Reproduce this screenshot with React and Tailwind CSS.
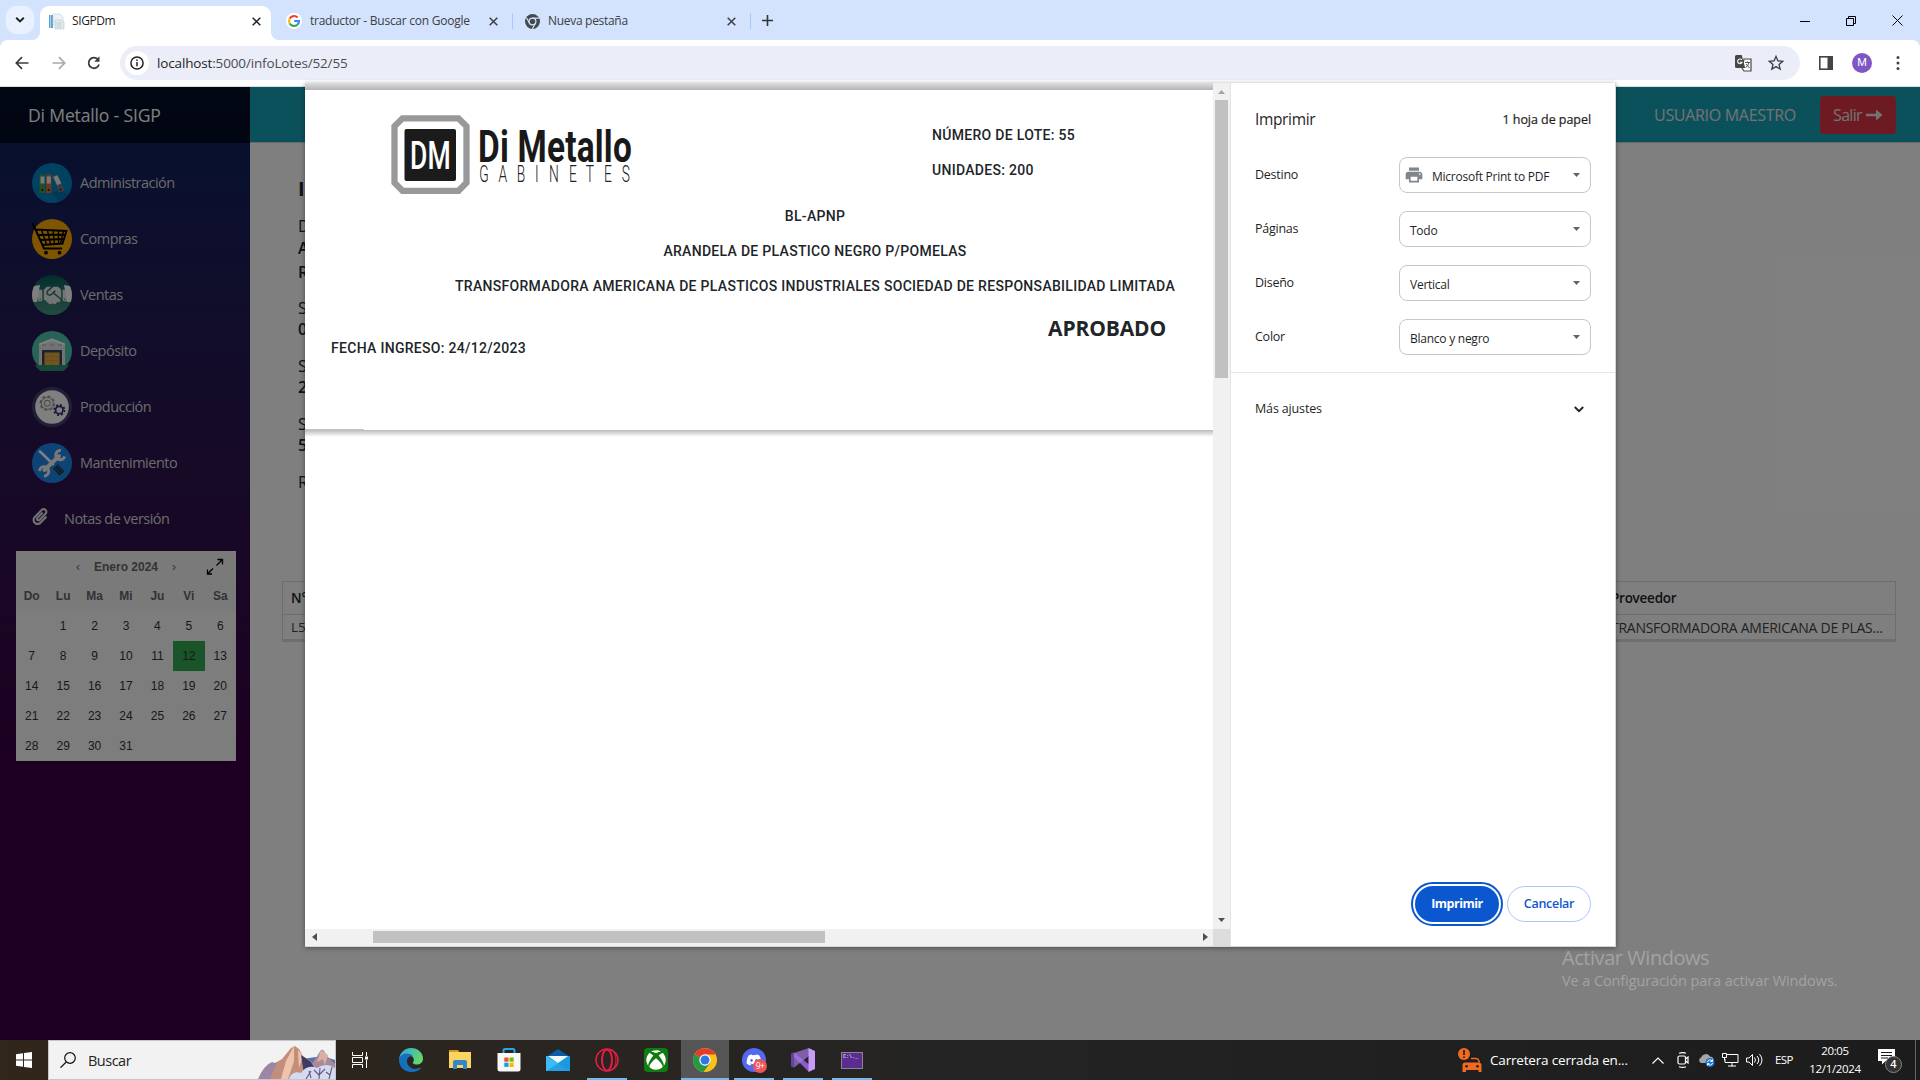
import React from "react";
import { FaHandshake, FaXbox, FaDiscord, FaPaperclip, FaLongArrowAltRight } from "react-icons/fa";
import { MdPrint, MdStarBorder } from "react-icons/md";

const UI = "font-['Open_Sans','Noto_Sans',sans-serif]";

function Close({ className = "" }) {
  return (
    <svg className={className} width="9" height="9" viewBox="0 0 9 9" stroke="currentColor" strokeWidth="1.5">
      <path d="M.7.7l7.6 7.6M8.3.7L.7 8.3" />
    </svg>
  );
}

function GoogleG() {
  return (
    <svg width="16" height="16" viewBox="0 0 16 16">
      <circle cx="8" cy="8" r="8" fill="#fff" />
      <g fill="none" strokeWidth="2.2">
        <path d="M3.7 5.5A5 5 0 0 1 11.6 4.5" stroke="#ea4335" />
        <path d="M3.7 5.5a5 5 0 0 0 0 5" stroke="#fbbc05" />
        <path d="M3.7 10.5a5 5 0 0 0 7.5 1.3" stroke="#34a853" />
        <path d="M8.2 8H13a5 5 0 0 1-1.8 3.8" stroke="#4285f4" />
      </g>
    </svg>
  );
}

function ChromeGray() {
  return (
    <svg width="15" height="15" viewBox="0 0 16 16">
      <circle cx="8" cy="8" r="8" fill="#45494d" />
      <circle cx="8" cy="8" r="3.6" fill="none" stroke="#d3e3fd" strokeWidth="1.3" />
      <path d="M8 4.4h7M4.9 9.8L1.5 4M11.1 9.8L7.8 15.8" stroke="#d3e3fd" strokeWidth="1.2" />
    </svg>
  );
}

function TabStrip() {
  return (
    <div className="flex h-10 shrink-0 items-end bg-[#d3e3fd] text-[12px] tracking-[-0.3px] text-[#3c4043]">
      <div className="ml-1.5 mb-1.5 flex h-7 w-7 items-center justify-center rounded-[10px] bg-[#e9f1fe]">
        <svg width="10" height="6" viewBox="0 0 10 6" fill="none" stroke="#1f1f1f" strokeWidth="1.9"><path d="M1.2 .8L5 4.5 8.800 .8" /></svg>
      </div>
      <div className="relative ml-1.5 flex h-[34px] w-[231px] items-center rounded-t-[9px] bg-white pb-1 text-[#1f1f1f]">
        <svg className="absolute -left-2 bottom-0" width="8" height="8"><path d="M8 0v8H0a8 8 0 0 0 8-8z" fill="#fff" /></svg>
        <svg className="absolute -right-2 bottom-0" width="8" height="8"><path d="M0 0v8h8a8 8 0 0 1-8-8z" fill="#fff" /></svg>
        <svg className="ml-2" width="17" height="17" viewBox="0 0 17 17">
          <path d="M1 2h4v13H1z" fill="#5ba3cf" /><path d="M2 2h1v13H2z" fill="#a7d3ee" />
          <path d="M5 1h7l3 3v8H5z" fill="#eef3f7" stroke="#c3ccd3" strokeWidth=".6" />
          <path d="M7 7h6l3 2v7H7z" fill="#e3eaf0" stroke="#b9c3cc" strokeWidth=".6" />
          <path d="M8.500 10h5M8.500 12h5M8.500 14h5" stroke="#b2bdc8" strokeWidth=".7" />
        </svg>
        <span className="ml-[7px] flex-1 tracking-[-0.4px]">SIGPDm</span>
        <Close className="mr-[10px]" />
      </div>
      <div className="flex h-[34px] w-[242px] items-center pb-1 pl-[15px]">
        <GoogleG />
        <span className="ml-2 flex-1 whitespace-nowrap tracking-[-0.25px]">traductor - Buscar con Google</span>
        <Close className="mr-[14px]" />
        <i className="h-4 w-px bg-[#a8c7fa]" />
      </div>
      <div className="flex h-[34px] w-[238px] items-center pb-1 pl-3">
        <ChromeGray />
        <span className="ml-2 flex-1 tracking-[-0.3px]">Nueva pestaña</span>
        <Close className="mr-[14px]" />
        <i className="h-4 w-px bg-[#a8c7fa]" />
      </div>
      <svg className="mb-[14px] ml-[11px]" width="11" height="11" viewBox="0 0 11 11" stroke="#333" strokeWidth="1.6"><path d="M5.500 0v11M0 5.500h11" /></svg>
      <div className="mb-[14px] ml-auto mr-[17px] flex items-center gap-9">
        <svg width="10" height="10" stroke="#000"><path d="M0 5.500h10" /></svg>
        <svg width="10" height="10" fill="none" stroke="#000"><path d="M.5 2.500h7v7h-7zM2.500 2.500v-2h7v7h-2" /></svg>
        <svg width="11" height="11" stroke="#000"><path d="M.5.5l10 10M10.500.5l-10 10" /></svg>
      </div>
    </div>
  );
}

function Toolbar() {
  return (
    <div className="bg-[#d3e3fd]">
      <div className="flex h-[47px] items-center rounded-t-[8px] border-b border-[#dcdcdc] bg-white">
        <svg className="ml-[15px]" width="14" height="14" viewBox="0 0 14 14" fill="none" stroke="#3c3c3c" strokeWidth="1.700"><path d="M13.500 7H1.500M7 1.200L1.300 7 7 12.800" /></svg>
        <svg className="ml-[23px]" width="14" height="14" viewBox="0 0 14 14" fill="none" stroke="#a9a9a9" strokeWidth="1.700"><path d="M.5 7h12M7 1.200L12.700 7 7 12.800" /></svg>
        <svg className="ml-[21px]" width="14" height="14" viewBox="0 0 14 14" fill="none" stroke="#3c3c3c" strokeWidth="1.800"><path d="M12 8.500A5.300 5.300 0 1 1 11 3.500" /><path d="M12.500 .3v5.400H7.200z" fill="#3c3c3c" stroke="none" /></svg>
        <div className="ml-[19px] flex h-[34px] w-[1680px] items-center rounded-full bg-[#ebeef8]">
          <div className="ml-[5px] flex h-6 w-6 items-center justify-center rounded-full bg-white">
            <svg width="14" height="14" viewBox="0 0 14 14" fill="none" stroke="#222" strokeWidth="1.500"><circle cx="7" cy="7" r="6.100" /><path d="M7 6v4.200M7 3.500v1.500" /></svg>
          </div>
          <span className="ml-2 text-[13.500px] tracking-[-0.15px] text-[#4a4d51]"><span className="text-[#1f1f1f]">localhost</span>:5000/infoLotes/52/55</span>
          <svg className="ml-auto" width="17" height="17" viewBox="0 0 17 17">
            <path d="M9 4h7v12H9L7 13z" fill="#fff" stroke="#474747" strokeWidth="1.200" />
            <path d="M1.500 0h5.200l3.500 13H1.500A1.500 1.500 0 0 1 0 11.500v-10A1.500 1.500 0 0 1 1.500 0z" fill="#474747" />
            <path d="M6.800 5a2.300 2.300 0 1 0 .3 2.200H4.800" fill="none" stroke="#fff" strokeWidth="1.100" />
            <path d="M10 7.500h5M12.500 6.500v1M14 7.500q-1 4-3.500 5M11 9l3.500 4" fill="none" stroke="#474747" strokeWidth=".9" />
          </svg>
          <MdStarBorder className="ml-[14px] mr-[14px] text-[#3c4043]" size={20} />
        </div>
        <svg className="ml-[19px]" width="14" height="14" viewBox="0 0 14 14"><rect x=".8" y=".8" width="12.400" height="12.400" fill="none" stroke="#444" strokeWidth="1.600" /><path d="M8.500 0H14v14H8.500z" fill="#444" /></svg>
        <div className="ml-[19px] flex h-5 w-5 items-center justify-center rounded-full bg-[#7e57c2] font-[Roboto,sans-serif] text-[11px] text-white">M</div>
        <svg className="ml-[24px]" width="4" height="14" fill="#444"><circle cx="2" cy="1.600" r="1.500" /><circle cx="2" cy="7" r="1.500" /><circle cx="2" cy="12.400" r="1.500" /></svg>
      </div>
    </div>
  );
}

function AdminIcon() {
  return (
    <svg width="40" height="40" viewBox="0 0 40 40">
      <circle cx="20" cy="20" r="20" fill="#0285c7" />
      <path d="M19 29l13-1 4 3a20 20 0 0 1-9 7z" fill="#0270aa" />
      <path d="M7.500 11.500h5.500V30H7.500z" fill="#4e9b3c" /><path d="M8.500 13.500h4v7h-4z" fill="#eee" />
      <path d="M14 11.500h5.500V30H14z" fill="#d1713c" /><path d="M14.800 13.500h4v7h-4z" fill="#f2f2f2" />
      <path d="M20.500 13.500l5-2.200L32.500 27.500l-5 2.300z" fill="#77797c" /><path d="M21.300 14l4-1.700 4 8-4.200 2z" fill="#eee" />
      <g fill="#222"><circle cx="10.300" cy="27" r="1" /><circle cx="16.700" cy="27" r="1" /><circle cx="28.600" cy="26.500" r="1" /></g>
    </svg>
  );
}
function CartIcon() {
  return (
    <svg width="40" height="40" viewBox="0 0 40 40" className="overflow-visible">
      <circle cx="20" cy="20" r="20" fill="#ffab00" />
      <g fill="none" stroke="#000" strokeWidth="1.900">
        <path d="M0 4l3.500 6.500L12 29.500h18M3.500 10.500l31 1.500-4 12.500-20.500 1.500M6 16l27-.5M8 21l24-1" />
        <path d="M9.500 11l5 14.500M15.500 11.500l3 13.500M21 11.500l1.500 13.500M26.500 12l0 12.500M31.500 12l-3 12.500" strokeWidth="1.400" />
      </g>
      <circle cx="14" cy="33.700" r="1.900" /><circle cx="27.500" cy="33.700" r="1.900" />
    </svg>
  );
}
function SalesIcon() {
  return (
    <div className="relative flex h-10 w-10 items-center justify-center overflow-hidden rounded-full bg-linear-to-b from-[#045a5a] to-[#489884]">
      <svg className="absolute inset-0" width="40" height="40"><path d="M2 11l6-1-3 17H0V14zM38 11l-6-1 3 17h5V14z" fill="#fff" /></svg>
      <FaHandshake className="text-[#e8e8e8]" size={29} />
    </div>
  );
}
function DepotIcon() {
  return (
    <svg width="40" height="40" viewBox="0 0 40 40">
      <circle cx="20" cy="20" r="20" fill="#4fc9ae" />
      <path d="M3 34h34a20 20 0 0 1-34 0z" fill="#2f9277" />
      <path d="M7 12.500L20 7.500l13 5V34H7z" fill="#e4e4ea" /><path d="M7 12.500L20 7.500l13 5v2L20 10 7 14.500z" fill="#fff" />
      <path d="M10 19h20v15H10z" fill="#3b4658" /><path d="M12.500 21.500h15V34h-15z" fill="#e5ad44" />
      <path d="M12.500 25.500h15M12.500 29.500h15M20 21.500V34" stroke="#cb922f" strokeWidth=".7" />
      <path d="M10 14h4M18 14h4M26 14h4" stroke="#bdbdc8" strokeWidth="1.500" />
    </svg>
  );
}
function GearsIcon() {
  return (
    <svg width="40" height="40" viewBox="0 0 40 40" fill="none">
      <circle cx="20" cy="20" r="18.400" fill="#fff" stroke="#483b70" strokeWidth="3.200" />
      <circle cx="15.300" cy="16.300" r="7" stroke="#999" strokeWidth="1.600" strokeDasharray="3.100 2.398" />
      <circle cx="15.300" cy="16.300" r="5.900" stroke="#999" strokeWidth="1" /><circle cx="15.300" cy="16.300" r="2.900" stroke="#999" strokeWidth="1.100" />
      <circle cx="27.300" cy="23" r="5.100" stroke="#3d2c72" strokeWidth="1.900" strokeDasharray="2 2.005" /><circle cx="27.300" cy="23" r="3.700" stroke="#3d2c72" strokeWidth="1.700" />
    </svg>
  );
}
function ToolsIcon() {
  return (
    <svg width="40" height="40" viewBox="0 0 40 40" fill="none" strokeLinecap="round">
      <circle cx="20" cy="20" r="20" fill="#1c87ea" />
      <path d="M8 8.500L21 21" stroke="#fff" strokeWidth="2.600" />
      <path d="M23.500 23.500l6.500 7" stroke="#1d3b58" strokeWidth="6.500" strokeLinecap="butt" /><path d="M23 25l6 6.500M25.500 23l6 6.500" stroke="#4c6985" strokeWidth=".8" />
      <path d="M12.500 27L27 13" stroke="#f2f2f2" strokeWidth="4" />
      <path d="M29 7.500a4.600 4.600 0 1 0 3.700 6M7.500 28a4.600 4.600 0 1 1 4.500 5" stroke="#f2f2f2" strokeWidth="3" strokeLinecap="butt" />
    </svg>
  );
}

const NAV = [
  ["Administración", AdminIcon],
  ["Compras", CartIcon],
  ["Ventas", SalesIcon],
  ["Depósito", DepotIcon],
  ["Producción", GearsIcon],
  ["Mantenimiento", ToolsIcon],
];

const DAYS = ["", ...Array.from({ length: 31 }, (_, i) => String(i + 1))];

function Calendar() {
  return (
    <div className="mx-4 mt-1 h-[210px] w-[220px] bg-[#fbfbfb] font-['Liberation_Sans',Arial,sans-serif] text-[12px] text-[#333]">
      <div className="bg-[#f5f5f5] font-bold text-[#666]">
        <div className="flex h-[30px] items-center pl-[60px] pt-0.5">
          <span className="font-normal">‹</span>
          <span className="ml-[14px] whitespace-nowrap">Enero 2024</span>
          <span className="ml-[14px] font-normal">›</span>
          <svg className="ml-auto mr-3" width="18" height="18" viewBox="0 0 18 18" fill="none" stroke="#000" strokeWidth="1.300"><path d="M10.500 7.500L16.500 1.500M11.500 1.500h5v5M7 10.500L1.500 16M1.500 11.500V16H6" /></svg>
        </div>
        <div className="grid h-[30px] grid-cols-7 items-center text-center">
          {["Do", "Lu", "Ma", "Mi", "Ju", "Vi", "Sa"].map((d) => <span key={d}>{d}</span>)}
        </div>
      </div>
      <div className="grid grid-cols-7 text-center leading-[30px]">
        {DAYS.map((d) => <span key={d} className={d === "12" ? "h-[30px] bg-[#34a853]" : "h-[30px]"}>{d}</span>)}
      </div>
    </div>
  );
}

function Sidebar() {
  return (
    <aside className="w-[250px] shrink-0 bg-linear-to-b from-[#042360] to-[#3a0042] to-70%">
      <div className="flex h-14 items-center bg-black/60 pl-7 text-[17.600px] tracking-[-0.18px] text-white">Di Metallo - SIGP</div>
      <nav className="pt-3 text-[14.500px] text-[#d7d7d7]">
        {NAV.map(([label, Icon]) => (
          <div key={label} className="flex h-14 items-center gap-2 pl-8 tracking-[-0.52px]">
            <Icon />
            <span>{label}</span>
          </div>
        ))}
        <div className="flex h-14 items-center pl-8 tracking-[-0.53px]">
          <FaPaperclip className="-mt-1.5 w-4 text-[#e4e4e4]" size={17} />
          <span className="ml-4">Notas de versión</span>
        </div>
      </nav>
      <Calendar />
    </aside>
  );
}

function MainPage() {
  return (
    <main className="min-w-0 flex-1 bg-white text-[#212529]">
      <header className="flex h-14 items-center justify-end border-b border-[#d0d0d0] bg-[#17a2b8] text-[16px] text-[#e6e6e6]">
        <span className="mt-px tracking-[-0.3px]">USUARIO MAESTRO</span>
        <div className="ml-6 mr-6 flex h-[38px] w-[76px] items-center justify-center rounded bg-[#dc3545] tracking-[-0.7px]">Salir
          <svg className="ml-1" width="17" height="12" viewBox="0 0 17 12"><path d="M0 4.700h10V.5L16.500 6 10 11.500V7.300H0z" fill="currentColor" /></svg>
        </div>
      </header>
      <div className="flex h-[438px] flex-col pl-12 text-[16px] leading-[22px]">
        <b className="mt-[35px] text-[20px]">I</b>
        <span className="mt-[15px]">D</span><b className="font-semibold">A</b><b className="mt-0.5 font-semibold">R</b>
        <span className="mt-[14px]">S</span><b className="-mt-px font-semibold">0</b>
        <span className="mt-[15px]">S</span><b className="-mt-px font-semibold">2</b>
        <span className="mt-[15px]">S</span><b className="-mt-px font-semibold">5</b>
        <span className="mt-[15px]">R</span>
      </div>
      <div className="ml-8 mr-6 border border-b-[3px] border-[#ddd] text-[13.500px]">
        <div className="flex h-[33px] items-center border-b border-[#ddd] pl-2 pt-px font-semibold">
          <span className="w-[1320px]">N°</span><span className="tracking-[-0.25px] text-[13.500px]">Proveedor</span>
        </div>
        <div className="flex h-[24px] items-center whitespace-nowrap pl-2 text-[#444]">
          <span className="w-[1320px]">L5</span><span className="text-[14px] tracking-[-0.27px]">TRANSFORMADORA AMERICANA DE PLAS...</span>
        </div>
      </div>
    </main>
  );
}

function Logo() {
  return (
    <svg className="overflow-visible" width="242" height="80" viewBox="0 0 242 80">
      <path d="M11.500 3.300h56l8 8v56.500l-8 8h-56l-8-8v-56.500z" fill="none" stroke="#999" strokeWidth="6.300" />
      <rect x="13.500" y="14" width="51.500" height="52" rx="2" fill="#1b1b1b" />
      <text x="19" y="53.500" fill="#fff" fontFamily="Roboto, sans-serif" fontWeight="500" fontSize="38" textLength="41" lengthAdjust="spacingAndGlyphs">DM</text>
      <text x="87" y="46.500" fill="#191919" fontFamily="Roboto, sans-serif" fontWeight="700" fontSize="45" textLength="154" lengthAdjust="spacingAndGlyphs">Di Metallo</text>
      {["G", "A", "B", "I", "N", "E", "T", "E", "S"].map((c, i) => (
        <g key={i} transform={`translate(${[93, 112, 130, 146, 163, 182, 199, 217, 235][i]} 66.500) scale(.6 1)`}>
          <text textAnchor="middle" fill="#222" fontFamily="Roboto, sans-serif" fontWeight="300" fontSize="23">{c}</text>
        </g>
      ))}
    </svg>
  );
}

function Preview() {
  return (
    <section className="flex w-[908px] shrink-0 flex-col">
      <div className="h-[7px] bg-linear-to-b from-[#dcdde0] to-[#b2b4b8]" />
      <div className="flex h-[339px] flex-col font-[Roboto,sans-serif] text-[14px] font-medium tracking-[0.3px] text-[#212529]">
        <div className="flex h-[109px]">
          <div className="w-[627px] pl-[86px] pt-[25px]"><Logo /></div>
          <div className="pt-[28px] leading-[35px]"><p>NÚMERO DE LOTE: 55</p><p>UNIDADES: 200</p></div>
        </div>
        <div className="whitespace-nowrap pl-[112px] text-center leading-[35px]">
          <p>BL-APNP</p>
          <p>ARANDELA DE PLASTICO NEGRO P/POMELAS</p>
          <p>TRANSFORMADORA AMERICANA DE PLASTICOS INDUSTRIALES SOCIEDAD DE RESPONSABILIDAD LIMITADA</p>
        </div>
        <div className="flex justify-between pl-[26px] pr-[47px]">
          <p className="pt-[34px] leading-5">FECHA INGRESO: 24/12/2023</p>
          <p className={"pt-[9px] text-[21px] font-bold leading-[30px] tracking-[-0.15px] " + UI}>APROBADO</p>
        </div>
      </div>
      <div className="h-px w-[59px] bg-[#c4c4c4]" />
      <div className="h-[7px] bg-linear-to-b from-[#bcbcbc] to-white" />
      <div className="flex-1 bg-white" />
      <div className="flex h-[17px] items-center bg-[#f1f1f1] pb-px">
        <svg className="ml-[7px]" width="5" height="8"><path d="M5 0v8L0 4z" fill="#505050" /></svg>
        <div className="ml-[56px] h-3 w-[452px] bg-[#c1c1c1]" />
        <svg className="ml-auto mr-[5px]" width="5" height="8"><path d="M0 0v8l5-4z" fill="#505050" /></svg>
      </div>
    </section>
  );
}

function Setting({ label, value, icon }) {
  return (
    <div className="flex h-[54px] items-center text-[12.500px] tracking-[-0.25px]">
      <span className="mt-px w-36">{label}</span>
      <div className="flex h-9 w-[192px] items-center rounded-[8px] border border-[#c7c7c7] pr-[10px] text-[12px]">
        {icon ? <MdPrint className="ml-[4px] mr-[8px] -mt-px text-[#80868b]" size={20} /> : <span className="w-[10px]" />}
        <span className="mt-[3px] flex-1 whitespace-nowrap">{value}</span>
        <svg width="7" height="4"><path d="M0 0h7L3.500 4z" fill="#5f6368" /></svg>
      </div>
    </div>
  );
}

function Settings() {
  return (
    <section className="flex flex-1 flex-col border-l border-[#e3e3e8] text-[#1f1f1f]">
      <div className="flex h-[65px] items-center justify-between pl-[24px] pr-6 pt-[9px]">
        <span className="text-[15.500px] tracking-[-0.35px]">Imprimir</span>
        <span className="text-[12.500px] font-medium tracking-[-0.05px] [-webkit-text-stroke:0.2px]">1 hoja de papel</span>
      </div>
      <div className="h-[225px] border-b border-[#e3e3ea] pl-[24px]">
        <Setting label="Destino" value="Microsoft Print to PDF" icon />
        <Setting label="Páginas" value="Todo" />
        <Setting label="Diseño" value="Vertical" />
        <Setting label="Color" value="Blanco y negro" />
      </div>
      <div className="flex h-[72px] items-center justify-between pl-[24px] pr-[31px] text-[12.500px] tracking-[-0.15px]">
        <span className="mt-px">Más ajustes</span>
        <svg width="10" height="7" viewBox="0 0 10 7" fill="none" stroke="#1f1f1f" strokeWidth="1.800"><path d="M.8 1L5 5.200 9.200 1" /></svg>
      </div>
      <div className="mb-6 mr-6 mt-auto flex justify-end gap-2 text-[12.500px] font-semibold tracking-[-0.3px]">
        <button className="h-9 w-[84px] rounded-full bg-[#0b57d0] pt-px font-bold tracking-[-0.5px] text-white outline-2 outline-offset-2 outline-[#0b57d0]">Imprimir</button>
        <button className="h-9 w-[84px] rounded-full border border-[#a8c7fa] pt-px text-[#0b57d0]">Cancelar</button>
      </div>
    </section>
  );
}

function PrintDialog() {
  return (
    <div className="absolute left-[305px] top-[83px] flex h-[864px] w-[1311px] border-b border-r border-[#d5d5d5] bg-white shadow-[0_1px_5px_rgba(0,0,0,0.4)]">
      <Preview />
      <div className="flex w-[17px] flex-col items-center bg-[#f1f1f1]">
        <svg className="mt-[7px]" width="7" height="4"><path d="M0 4h7L3.500 0z" fill="#a3a3a3" /></svg>
        <div className="mt-[6px] h-[278px] w-[13px] bg-[#c1c1c1]" />
        <svg className="mb-[7px] mt-auto" width="7" height="4"><path d="M0 0h7L3.500 4z" fill="#505050" /></svg>
        <div className="h-[17px] w-full bg-[#dcdcdc]" />
      </div>
      <Settings />
    </div>
  );
}

function SearchArt() {
  return (
    <svg className="ml-auto" width="77" height="38" viewBox="0 0 77 38">
      <path d="M14 24q8-6 16-4l35-5 12 4v19H10z" fill="#5272b8" />
      <path d="M0 38q6-14 14-17l9 3-6 14z" fill="#9d86a5" />
      <path d="M52 26l11-17q3-1 5 5l9 9v15H50z" fill="#a98a96" /><path d="M63 9l-4 12 6-3 2 6 3-10z" fill="#d8b1a4" />
      <path d="M12 38l7-17 5-3 9-11 4-2 4 3 4 7 9 6 4 17z" fill="#c38f7c" />
      <path d="M36 5l-8 15-5 18h7l6-18zM40 9l1 18 4-12z" fill="#efc4ad" /><path d="M43 14l10 7 5 9-8-2-4 5z" fill="#3c3c63" />
      <path d="M31 38q3-9 12-6 6-9 16-5 9-6 18 0v11z" fill="#d5daf3" />
      <path d="M48 38l5-8M53 37l-2-7M61 38l1-11M61 34l-5-5M62 33l5-5M71 38l3-12M72 34l-4-3" stroke="#685778" strokeWidth="1.100" fill="none" />
    </svg>
  );
}

function ChromeLogo() {
  return (
    <svg width="24" height="24" viewBox="0 0 24 24">
      <circle cx="12" cy="12" r="12" fill="#fbc116" />
      <path d="M12 12L1.600 6A12 12 0 0 0 10.500 23.900L17.200 15z" fill="#279847" />
      <path d="M12 12L1.600 6A12 12 0 0 1 22.400 6.400H12z" fill="#e33b2e" />
      <circle cx="12" cy="12" r="5.700" fill="#fff" /><circle cx="12" cy="12" r="4.500" fill="#2f76e6" />
    </svg>
  );
}

const APPS = [
  { icon: (
    <svg width="24" height="24" viewBox="0 0 24 24">
      <defs><linearGradient id="eg" x1="0" y1="0" x2="1" y2=".4"><stop stopColor="#2ba5e8" /><stop offset="1" stopColor="#62d66d" /></linearGradient></defs>
      <path d="M0 11.500C.6 4.500 6 0 12 0c7 0 12 5 12 10.500 0 4-3 6-6.500 6-3 0-4-1.300-3.500-2.300 2-2.500.5-6.700-4-6.700-5 0-9 3-10 4z" fill="url(#eg)" />
      <path d="M0 12c0-4 4-6.500 8-6.500 3 0 5 1 6 3-4-1.500-6.500 2-6 5.500.7 5 6 8 10.500 6.500 2-.6 3.500-1 3.700-.5C20 22.700 16.500 24 12.500 24 5 24 0 18.500 0 12z" fill="#1570bd" />
    </svg>) },
  { icon: (
    <svg width="24" height="22" viewBox="0 0 24 22"><path d="M1 1h9l2 3H1z" fill="#d59a16" /><path d="M1 3h22v16H1z" fill="#fcd462" /><path d="M5 20v-7q0-2 2-2h10q2 0 2 2v7h-4v-4H9v4z" fill="#3587cb" /></svg>) },
  { icon: (
    <svg width="24" height="24" viewBox="0 0 24 24"><path d="M6.500 6V2.500Q6.500 1 8 1h8q1.500 0 1.500 1.500V6" fill="none" stroke="#29a5ea" strokeWidth="2" /><path d="M.5 5h23v16q0 2.500-2.500 2.500H3Q.5 23.500 .5 21z" fill="#f7f7f7" /><path d="M7.300 9.500h4.200v4.200H7.300z" fill="#f25022" /><path d="M12.500 9.500h4.200v4.200h-4.200z" fill="#7fba00" /><path d="M7.300 14.700h4.200v4.200H7.300z" fill="#00a4ef" /><path d="M12.500 14.700h4.200v4.200h-4.200z" fill="#ffb900" /></svg>) },
  { icon: (
    <svg width="24" height="24" viewBox="0 0 24 24"><path d="M0 9L12 1l12 8z" fill="#075fab" /><path d="M0 8h24v15H0z" fill="#1fa7ea" /><path d="M0 8l12 7.500L24 23H0z" fill="#3bbcf6" /><path d="M24 8v15H0z" fill="#168fda" opacity=".6" /><path d="M2 8h20l-10 7z" fill="#f5f7fa" /></svg>) },
  { running: true, icon: (
    <svg width="24" height="24" viewBox="0 0 24 24" fill="none" stroke="#e51c46" strokeWidth="1.500"><circle cx="12" cy="12" r="11" /><ellipse cx="12" cy="12" rx="5" ry="10.500" strokeWidth="2" /><path d="M14 1.500q7 1.500 7 10.500t-7 10.500" strokeWidth="1" /></svg>) },
  { icon: <div className="flex h-6 w-6 items-center justify-center rounded-sm bg-[#107c10]"><FaXbox className="text-white" size={20} /></div> },
  { running: true, active: true, icon: <ChromeLogo /> },
  { running: true, icon: (
    <div className="relative flex h-6 w-6 items-center justify-center rounded-full bg-[#5368f0]">
      <FaDiscord className="text-white" size={16} />
      <span className="absolute -bottom-px -right-px flex h-[14px] w-[14px] items-center justify-center rounded-full bg-[#ed5558] text-[8.500px] tracking-[-0.5px] text-white">9+</span>
    </div>) },
  { running: true, icon: (
    <svg width="24" height="24" viewBox="0 0 24 24"><path d="M0 6l3-1.500 15 12v7.500z" fill="#8a5bcb" /><path d="M0 6v12l3 1.500L18 8V0z" fill="#a477e0" opacity=".7" /><path d="M0 6l3-1.500V19.500L0 18z" fill="#65449c" /><path d="M17.500 0L24 3v18l-6.500 3z" fill="#c79bf8" /></svg>) },
  { running: true, icon: (
    <div className="h-[17px] w-[22px] border border-[#888] bg-[#5c2d91] pl-px pt-px font-['Liberation_Mono',monospace] text-[5px] leading-[6px] text-white">C:\._</div>) },
];

function Taskbar() {
  return (
    <footer className="flex h-10 shrink-0 bg-linear-to-r from-[#30261b] via-[#242424] to-[#1c1c1c] text-white">
      <div className="flex w-12 items-center justify-center">
        <svg width="16" height="16" viewBox="0 0 16 16" fill="#fff"><path d="M0 2.300L7 1.300v6.300H0zM8 1.100L16 0v7.600H8zM0 8.500h7v6.300l-7-1zM8 8.500h8V16l-8-1.100z" /></svg>
      </div>
      <div className="flex h-10 w-[288px] items-center border border-[#c6c6c6] bg-[#f2f2f2] pl-[11px] text-[#222]">
        <svg width="16" height="16" viewBox="0 0 16 16" fill="none" stroke="#111" strokeWidth="1.200"><circle cx="10" cy="6" r="5.300" /><path d="M6.200 10L.5 15.700" /></svg>
        <span className="ml-3 mt-px text-[14.500px] tracking-[-0.5px]">Buscar</span>
        <SearchArt />
      </div>
      <div className="mr-[3px] flex w-12 items-center justify-center">
        <svg width="17" height="16" viewBox="0 0 17 16" fill="none" stroke="#fff"><path d="M.5 0v3.500h10V0M.5 16v-3.500h10V16M.5 5.500h10v5H.5zM14.500 0v4M14.500 8v8" /><path d="M13 4.500h3v3h-3z" fill="#fff" stroke="none" /></svg>
      </div>
      <div className="flex gap-px">
        {APPS.map((a, i) => (
          <div key={i} className={"flex h-10 w-12 flex-col items-center " + (a.active ? "bg-[#555]" : "")}>
            <div className="flex h-[38px] items-center pt-0.5">{a.icon}</div>
            {a.running && <i className={a.active ? "h-0.5 w-12 bg-[#76b9ed]" : "h-0.5 w-10 bg-[#76b9ed]"} />}
          </div>
        ))}
      </div>
      <div className="ml-auto flex items-center text-[12px]">
        <svg width="24" height="24" viewBox="0 0 24 24" fill="#f26a21"><circle cx="6" cy="6" r="6" /><path d="M6 2v5M6 8.500V10" stroke="#1c1c1c" strokeWidth="1.600" /><path d="M13 10.500h5q2 0 2.500 1.500l1 2.500" fill="none" stroke="#f26a21" strokeWidth="1.500" /><path d="M4.500 17q0-2 2-2.500h15q2 .5 2 2.500v7h-3v-2H8v2H4.500z" /><circle cx="8.500" cy="18.300" r="1.300" fill="#1c1c1c" /><circle cx="19.500" cy="18.300" r="1.300" fill="#1c1c1c" /></svg>
        <span className="ml-2 w-[162px] whitespace-nowrap text-[13.500px] tracking-[-0.18px]">Carretera cerrada en...</span>
        <svg width="12" height="7" viewBox="0 0 12 7" fill="none" stroke="#fff" strokeWidth="1.200"><path d="M.5 6.500L6 1l5.500 5.500" /></svg>
        <svg className="ml-[13px]" width="12" height="16" viewBox="0 0 12 16" fill="none" stroke="#fff" strokeWidth="1.200"><rect x="1" y="4" width="7.500" height="8" rx="1.500" /><path d="M8.500 7L11 5v6L8.500 9M2 1.200q4-1.200 7 0M2 14.800q4 1.200 7 0" /></svg>
        <svg className="ml-[9px]" width="17" height="14" viewBox="0 0 17 14"><path d="M3 10a3 3 0 0 1 0-5.500A5 5 0 0 1 12 3.500a4 4 0 0 1 3 6.500z" fill="#a5a5a5" /><circle cx="12" cy="9.500" r="4.500" fill="#1673d0" /><path d="M9.500 9a2.500 2.500 0 0 1 4.500-1M14.500 10a2.500 2.500 0 0 1-4.500 1M14.500 6.500V8.500h-2M9.500 12.500v-2h2" fill="none" stroke="#fff" /></svg>
        <svg className="ml-[7px]" width="17" height="14" viewBox="0 0 17 14" fill="none" stroke="#fff"><path d="M5 1.500h11v8H3V6M.5.5h4v4h-4zM2.500 4.500v3M10 9.500v4M6 13h8" /></svg>
        <svg className="ml-[7px]" width="17" height="14" viewBox="0 0 17 14" fill="none" stroke="#fff"><path d="M.5 5h2.500l3.500-3.500v11L3 9H.5zM8.500 4.500q2 2.500 0 5M11 3q3.500 4 0 8M13.500 1.200q5 5.800 0 11.600" /></svg>
        <span className="ml-3 w-5 text-[11.500px] tracking-[-0.6px]">ESP</span>
        <div className="ml-[11px] w-[58px] text-center text-[11.500px] leading-[18px] tracking-[-0.35px]"><p>20:05</p><p>12/1/2024</p></div>
        <div className="relative ml-[14px] h-[26px] w-[37px] pt-0.5">
          <svg width="17" height="16" viewBox="0 0 17 16"><path d="M0 0h17v12H7.500L4 15.500V12H0z" fill="#fff" /><path d="M3 3.500h11M3 6.500h11M3 9h7" stroke="#1c1c1c" /></svg>
          <span className="absolute left-[7px] top-[9px] flex h-[17px] w-[17px] items-center justify-center rounded-full border border-[#888] bg-[#333] text-[11px] font-semibold">4</span>
        </div>
        <i className="mr-1 h-10 w-px bg-[#666]" />
      </div>
    </footer>
  );
}

export default function App() {
  return (
    <div className={"relative flex h-[1080px] w-[1920px] flex-col overflow-hidden " + UI}>
      <TabStrip />
      <Toolbar />
      <div className="relative flex min-h-0 flex-1 overflow-hidden">
        <Sidebar />
        <MainPage />
        <div className="absolute inset-0 bg-black/50" />
        <div className="absolute left-[1562px] top-[857px] whitespace-nowrap text-[#a3a3a3]">
          <p className="text-[20px] leading-7 tracking-[-0.45px]">Activar Windows</p>
          <p className="text-[14.500px] leading-[18px] tracking-[-0.1px]">Ve a Configuración para activar Windows.</p>
        </div>
      </div>
      <Taskbar />
      <PrintDialog />
    </div>
  );
}
